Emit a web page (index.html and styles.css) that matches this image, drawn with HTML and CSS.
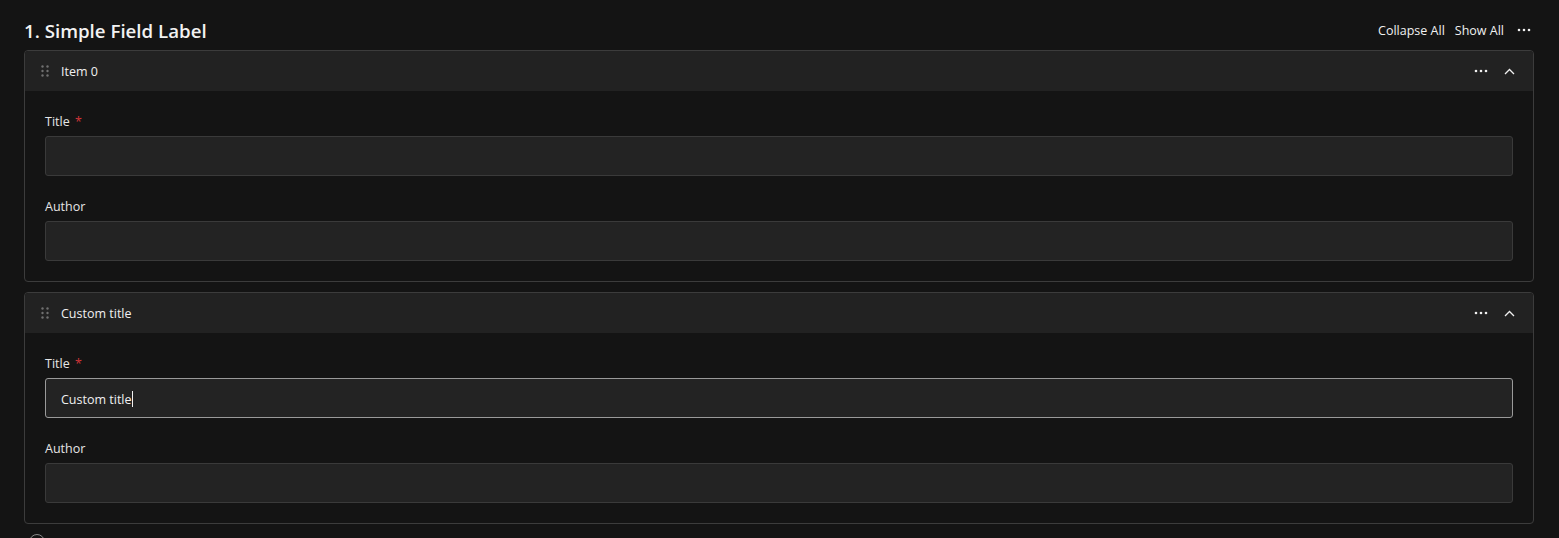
FILE: index.html
```html
<!DOCTYPE html>
<html lang="en">

<head>
  <meta charset="UTF-8" />
  <meta name="viewport" content="width=device-width, initial-scale=1.0" />
  <title>Simple Field Label</title>
  <link rel="stylesheet" href="styles.css">
</head>

<body>
  <div class="section">
    <div class="section-head">
      <h1>1. Simple Field Label</h1>
      <div class="section-actions">
        <button class="link-btn">Collapse All</button>
        <button class="link-btn">Show All</button>
        <button class="icon-btn" aria-label="More">
          <svg width="14" height="4" viewBox="0 0 14 4"><circle cx="2" cy="2" r="1.3" /><circle cx="7" cy="2" r="1.3" /><circle cx="12" cy="2" r="1.3" /></svg>
        </button>
      </div>
    </div>

    <div class="item">
      <div class="item-head">
        <span class="drag">
          <svg width="8" height="12" viewBox="0 0 8 12"><circle cx="1.5" cy="1.5" r="1.2" /><circle cx="6.5" cy="1.5" r="1.2" /><circle cx="1.5" cy="6" r="1.2" /><circle cx="6.5" cy="6" r="1.2" /><circle cx="1.5" cy="10.5" r="1.2" /><circle cx="6.5" cy="10.5" r="1.2" /></svg>
        </span>
        <span class="item-title">Item 0</span>
        <div class="item-actions">
          <button class="icon-btn" aria-label="More">
            <svg width="14" height="4" viewBox="0 0 14 4"><circle cx="2" cy="2" r="1.3" /><circle cx="7" cy="2" r="1.3" /><circle cx="12" cy="2" r="1.3" /></svg>
          </button>
          <button class="icon-btn" aria-label="Collapse">
            <svg class="chevron" width="11" height="7" viewBox="0 0 11 7"><path d="M1 6 L5.5 1.5 L10 6" /></svg>
          </button>
        </div>
      </div>
      <div class="item-body">
        <div class="field">
          <label>Title <span class="req">*</span></label>
          <input type="text" class="text-input" />
        </div>
        <div class="field">
          <label>Author</label>
          <input type="text" class="text-input" />
        </div>
      </div>
    </div>

    <div class="item">
      <div class="item-head">
        <span class="drag">
          <svg width="8" height="12" viewBox="0 0 8 12"><circle cx="1.5" cy="1.5" r="1.2" /><circle cx="6.5" cy="1.5" r="1.2" /><circle cx="1.5" cy="6" r="1.2" /><circle cx="6.5" cy="6" r="1.2" /><circle cx="1.5" cy="10.5" r="1.2" /><circle cx="6.5" cy="10.5" r="1.2" /></svg>
        </span>
        <span class="item-title">Custom title</span>
        <div class="item-actions">
          <button class="icon-btn" aria-label="More">
            <svg width="14" height="4" viewBox="0 0 14 4"><circle cx="2" cy="2" r="1.3" /><circle cx="7" cy="2" r="1.3" /><circle cx="12" cy="2" r="1.3" /></svg>
          </button>
          <button class="icon-btn" aria-label="Collapse">
            <svg class="chevron" width="11" height="7" viewBox="0 0 11 7"><path d="M1 6 L5.5 1.5 L10 6" /></svg>
          </button>
        </div>
      </div>
      <div class="item-body">
        <div class="field">
          <label>Title <span class="req">*</span></label>
          <div class="text-input is-active"><span>Custom title</span><span class="caret"></span></div>
        </div>
        <div class="field">
          <label>Author</label>
          <input type="text" class="text-input" />
        </div>
      </div>
    </div>

    <button class="add-btn" aria-label="Add"></button>
  </div>
</body>

</html>
```

FILE: styles.css
```css
body {
  font-family: "Open Sans", "Noto Sans", sans-serif;
  margin: 0;
  padding: 0;
  background-color: #141414;
  color: #e8e8e8;
  font-size: 12.5px;
  overflow: hidden;
}

.section {
  padding: 16px 25px 0 24px;
}

.section-head {
  display: flex;
  align-items: center;
  justify-content: space-between;
  height: 28px;
  margin-bottom: 6px;
}

h1 {
  margin: 0;
  font-size: 18.7px;
  font-weight: 600;
  color: #f2f2f2;
}

.section-actions {
  display: flex;
  align-items: center;
  gap: 10px;
}

button {
  font-family: inherit;
  background: none;
  border: none;
  color: #f0f0f0;
  padding: 0;
  cursor: pointer;
}

.link-btn {
  font-size: 12.5px;
}

.icon-btn {
  display: flex;
  align-items: center;
  justify-content: center;
  width: 20px;
  height: 20px;
}

.icon-btn svg {
  fill: #f0f0f0;
}

.icon-btn .chevron {
  fill: none;
  stroke: #f0f0f0;
  stroke-width: 1.3;
}

.item {
  border: 1px solid #3c3c3c;
  border-radius: 4px;
  margin-bottom: 10px;
  overflow: hidden;
}

.item-head {
  display: flex;
  align-items: center;
  height: 40px;
  background-color: #222;
  padding: 0 14px 0 16px;
}

.drag {
  display: flex;
  width: 20px;
}

.drag svg {
  fill: #707070;
}

.item-title {
  color: #f0f0f0;
}

.item-actions {
  margin-left: auto;
  display: flex;
  gap: 8px;
}

.item-body {
  padding: 22px 20px 20px 20px;
}

.field + .field {
  margin-top: 22px;
}

label {
  display: block;
  margin-bottom: 6px;
  color: #e6e6e6;
}

.req {
  color: #d13438;
  margin-left: 2px;
}

.text-input {
  display: flex;
  align-items: center;
  box-sizing: border-box;
  width: 100%;
  height: 40px;
  background-color: #232323;
  border: 1px solid #3a3a3a;
  border-radius: 3px;
  padding: 2px 15px 0;
  color: #f0f0f0;
  font-family: inherit;
  font-size: 12.5px;
}

.text-input.is-active {
  border-color: #9a9a9a;
}

.caret {
  display: inline-block;
  width: 1px;
  height: 16px;
  background-color: #f0f0f0;
}

.add-btn {
  display: block;
  width: 16px;
  height: 16px;
  border: 1px solid #8a8a8a;
  border-radius: 50%;
  margin: 2px 0 0 5px;
}
```
